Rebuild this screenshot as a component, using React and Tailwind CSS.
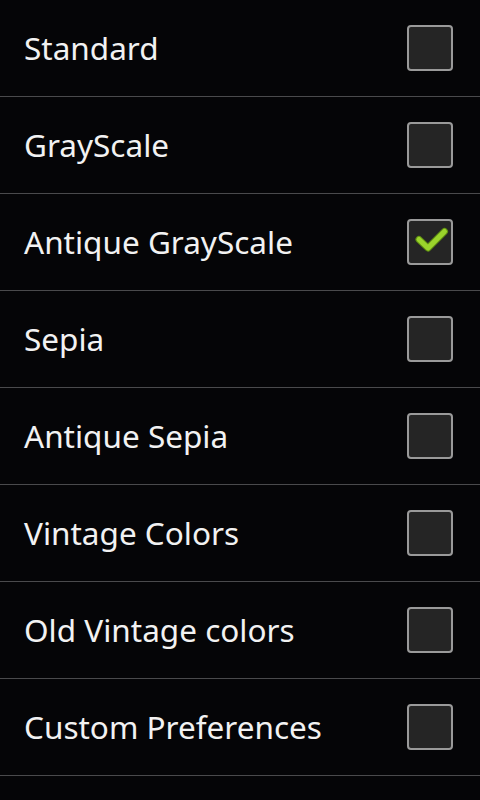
import React, { useState } from 'react'

const FILTERS = [
  'Standard',
  'GrayScale',
  'Antique GrayScale',
  'Sepia',
  'Antique Sepia',
  'Vintage Colors',
  'Old Vintage colors',
  'Custom Preferences',
]

const CheckBox = ({ checked }) => (
  <div className="w-[46px] h-[46px] rounded-[4px] border-2 border-[#9a9a9a] bg-[#252525]">
    {checked && (
      <svg width="42" height="42" viewBox="0 0 42 42">
        <path
          d="M10 18.5 L19 27 L35.5 10.5"
          fill="none"
          stroke="#5f8f12"
          strokeWidth="7"
          strokeLinecap="round"
          strokeLinejoin="round"
        />
        <path
          d="M10 18.5 L19 27 L35.5 10.5"
          fill="none"
          stroke="#9bd42c"
          strokeWidth="5"
          strokeLinecap="round"
          strokeLinejoin="round"
        />
      </svg>
    )}
  </div>
)

const App = () => {
  const [selected, setSelected] = useState(2)

  return (
    <div className="w-[480px] h-[800px] bg-[#050507] overflow-hidden" style={{ fontFamily: '"Noto Sans", "Open Sans", sans-serif' }}>
      {FILTERS.map((name, i) => (
        <div
          key={name}
          onClick={() => setSelected(i)}
          className="h-[97px] flex items-center justify-between pl-[24px] pr-[27px] border-b border-[#4a4a4c]"
        >
          <span className="text-[31.5px] text-[#f2f2f2] leading-none">{name}</span>
          <CheckBox checked={selected === i} />
        </div>
      ))}
    </div>
  )
}

export default App
